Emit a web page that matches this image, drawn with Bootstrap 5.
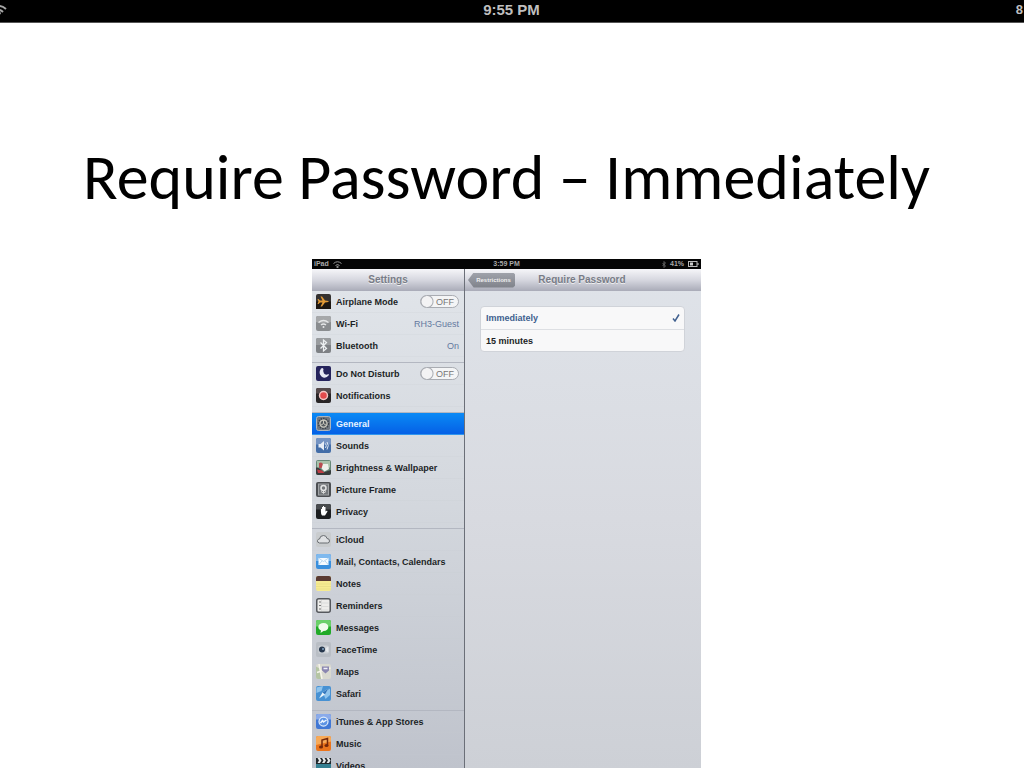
<!DOCTYPE html>
<html lang="en">
<head>
<meta charset="utf-8">
<meta name="viewport" content="width=device-width, initial-scale=1">
<title>Require Password – Immediately</title>
<link href="https://cdn.jsdelivr.net/npm/bootstrap@5.3.0/dist/css/bootstrap.min.css" rel="stylesheet">
<style>
  body { font-family: "Liberation Sans", Arial, sans-serif; background: #fff; }
  .topbar { height: 23px; background: #000; color: #bfbfbf; font-size: 15px; line-height: 20px; border-bottom: 1px solid #555; }
  .topbar .side { flex: 1 1 0; }
  .topbar .battery { font-size: 13px; padding-right: 1px; }
  .topbar svg { margin-left: -10px; }
  .slide { padding-right: 11px; }
  .slide-title { font-family: Carlito, Calibri, Lato, sans-serif; font-size: 64px; line-height: 70px; color: #000; padding-top: 119px; margin-bottom: 47px; font-weight: 400; }
  .tablet { width: 389px; font-size: 9px; line-height: 12px; color: #1c1f26; background: #000; }
  .tablet-status { height: 10px; background: #050505; color: #aaa; font-size: 7px; line-height: 10px; font-weight: 700; }
  .tablet-status .side { flex: 1 1 0; padding: 0 2px; }
  .sidebar { width: 153px; background: linear-gradient(#e1e5ea, #d4d8de 45%, #bfc3cc); border-right: 1px solid #6b6f78; }
  .detail { background: linear-gradient(#dfe3e9, #d8dae0 50%, #cdd0d6); }
  .bar { height: 22px; background: linear-gradient(#f6f6f9, #d6d7df 50%, #a9abb8); color: #787c87; font-size: 10px; font-weight: 700; text-shadow: 0 1px 0 #eee; }
  .detail .bar { display: grid; grid-template-columns: 47px 1fr 49px; align-items: center; text-align: center; padding-left: 3px; padding-right: 3px; }
  .back { height: 15px; padding: 0 3px 0 7px; border: 0; color: #eee; font-size: 6px; line-height: 15px; font-weight: 700; background: linear-gradient(#9fa2aa, #7f828a); clip-path: polygon(0 50%, 12% 0, 96% 0, 100% 12%, 100% 88%, 96% 100%, 12% 100%); }
  .group + .group { margin-top: 5px; border-top: 1px solid #b3b7c1; }
  .entry { height: 22px; padding: 0 5px 0 4px; gap: 5px; color: #1c1f26; font-weight: 700; text-decoration: none; border-bottom: 1px solid #c8ccd433; }
  .entry > svg { width: 15px; height: 15px; flex: none; }
  .entry .value { color: #64799f; font-weight: 400; }
  .entry.active { background: linear-gradient(#0a8af5, #0560e6); color: #e6f2ff; }
  .toggle { position: relative; width: 39px; height: 13px; }
  .toggle input { appearance: none; margin: 0; width: 39px; height: 13px; border: 1px solid #a9acb2; border-radius: 7px; background: radial-gradient(circle at 6px 50%, #f3f3f4 5px, #a9acb2 6px, #f4f5f6 7px); display: block; }
  .toggle span { position: absolute; left: 16px; top: 1px; line-height: 12px; font-weight: 400; color: #777; pointer-events: none; }
  .choices { margin: 15px 16px 0 15px; background: #f8f8f9; border: 1px solid #d0d3d9; border-radius: 4px; font-weight: 700; }
  .choice { height: 22px; padding: 0 4px 0 5px; }
  .choice + .choice { border-top: 1px solid #dddfe3; }
  .choice input { appearance: none; margin: 0; width: 0; height: 0; }
  .choice svg { visibility: hidden; }
  .choice:has(input:checked) { color: #40608f; }
  .choice:has(input:checked) svg { visibility: visible; }
</style>
</head>
<body class="vh-100 d-flex flex-column overflow-hidden">
<header class="topbar d-flex flex-shrink-0 fw-bold">
  <div class="side d-flex align-items-center"><svg width="18" height="16" viewBox="0 0 18 16" fill="none" stroke="#a5a5a5" stroke-width="2"><path d="M2 6Q9 0 16 6M5 9Q9 5 13 9"/><path d="M9 13l-2-3q2-2 4 0z" fill="#ccc" stroke="none"/></svg></div>
  <span>9:55 PM</span>
  <div class="side text-end battery">8</div>
</header>

<main class="slide flex-grow-1 d-flex flex-column align-items-center overflow-hidden">
  <h1 class="slide-title flex-shrink-0 text-nowrap">Require Password – Immediately</h1>

  <section class="tablet flex-grow-1 d-flex flex-column overflow-hidden">
    <div class="tablet-status d-flex flex-shrink-0">
      <div class="side d-flex align-items-center gap-1"><span>iPad</span><svg width="9" height="7" viewBox="0 0 18 14" fill="none" stroke="#999" stroke-width="2"><path d="M1 5Q9-2 17 5M5 9Q9 5 13 9"/><circle cx="9" cy="12" r="1.5" fill="#999"/></svg></div>
      <span>3:59 PM</span>
      <div class="side d-flex align-items-center justify-content-end gap-1"><svg width="4" height="7" viewBox="0 0 8 14" fill="none" stroke="#777" stroke-width="1.5"><path d="M1 4l6 6-3 3V1l3 3-6 6"/></svg><span>41%</span><svg width="11" height="6" viewBox="0 0 22 12"><rect x="1" y="1" width="17" height="10" fill="none" stroke="#bbb" stroke-width="2"/><path d="M4 3h6v6H4zM19 4h2v4h-2z" fill="#ccc"/></svg></div>
    </div>
    <div class="d-flex flex-grow-1 overflow-hidden">
      <nav class="sidebar flex-shrink-0 overflow-hidden" aria-label="Settings">
        <div class="bar d-flex align-items-center justify-content-center">Settings</div>
        <div class="group">
          <div class="entry d-flex align-items-center">
            <svg viewBox="0 0 30 30"><rect width="30" height="30" rx="4" fill="#343130"/><path d="M0 15h30v15H0z" fill="#1d1712"/><path d="M25 14l-7-1-6-8h-3l4 8H8L5 10H3l2 5-2 5h2l3-3h5l-4 8h3l6-8 7-1z" fill="#e29a36"/></svg>
            <label for="airplane" class="me-auto">Airplane Mode</label>
            <div class="toggle"><input type="checkbox" role="switch" id="airplane"><span>OFF</span></div>
          </div>
          <a href="#" class="entry d-flex align-items-center">
            <svg viewBox="0 0 30 30"><rect width="30" height="30" rx="4" fill="#898c8f"/><path d="M0 4q0-4 4-4h22q4 0 4 4v8q-15 6-30 0z" fill="#a6a8aa"/><path d="M5 13q10-8 20 0M10 18q5-4 10 0" fill="none" stroke="#e5e7e8" stroke-width="3"/><circle cx="15" cy="22" r="2" fill="#e5e7e8"/></svg>
            <span class="me-auto">Wi-Fi</span><span class="value">RH3-Guest</span>
          </a>
          <a href="#" class="entry d-flex align-items-center">
            <svg viewBox="0 0 30 30"><rect width="30" height="30" rx="4" fill="#7e8185"/><path d="M0 4q0-4 4-4h22q4 0 4 4v10H0z" fill="#999c9f"/><path d="M9 9l12 12-6 5V4l6 5L9 21" fill="none" stroke="#edf0f2" stroke-width="2.5"/></svg>
            <span class="me-auto">Bluetooth</span><span class="value">On</span>
          </a>
        </div>
        <div class="group">
          <div class="entry d-flex align-items-center">
            <svg viewBox="0 0 30 30"><rect width="30" height="30" rx="4" fill="#25235c"/><path d="M10 5q-6 9 1 16 8 6 15-3l-1-2q-6 3-9-1t-1-9l-2-2z" fill="#e7e8f4"/></svg>
            <label for="dnd" class="me-auto">Do Not Disturb</label>
            <div class="toggle"><input type="checkbox" role="switch" id="dnd"><span>OFF</span></div>
          </div>
          <a href="#" class="entry d-flex align-items-center">
            <svg viewBox="0 0 30 30"><rect width="30" height="30" rx="4" fill="#282526"/><path d="M0 4q0-4 4-4h22q4 0 4 4v7H0z" fill="#55494a"/><circle cx="15" cy="15" r="8" fill="#e24b4c" stroke="#f2c6c4" stroke-width="3"/></svg>
            <span>Notifications</span>
          </a>
        </div>
        <div class="group">
          <a href="#" class="entry active d-flex align-items-center" aria-current="page">
            <svg viewBox="0 0 30 30"><rect x="1" y="1" width="28" height="28" rx="4" fill="#707780" stroke="#aeb4ba" stroke-width="2"/><circle cx="15" cy="15" r="10" fill="none" stroke="#3b4148" stroke-width="3" stroke-dasharray="3 2"/><circle cx="15" cy="15" r="7" fill="#555b61" stroke="#cbc9bd" stroke-width="2.5"/><path d="M15 15V8M15 15l-6 4M15 15l6 4" stroke="#cbc9bd" stroke-width="2"/></svg>
            <span>General</span>
          </a>
          <a href="#" class="entry d-flex align-items-center">
            <svg viewBox="0 0 30 30"><rect width="30" height="30" rx="4" fill="#436da8"/><path d="M0 4q0-4 4-4h22q4 0 4 4v9H0z" fill="#7594c3"/><path d="M5 12h4l7-6v19l-7-6H5z" fill="#e6edf6"/><path d="M19 11q3 4 0 9M22 8q5 7 0 15" fill="none" stroke="#dce6f2" stroke-width="2"/></svg>
            <span>Sounds</span>
          </a>
          <a href="#" class="entry d-flex align-items-center">
            <svg viewBox="0 0 30 30"><rect width="30" height="30" rx="4" fill="#668878"/><path d="M2 2h26v13H2z" fill="#a8c1aa"/><path d="M0 15q8 0 14 10l16-5v6q0 4-4 4H4q-4 0-4-4z" fill="#353b3b"/><path d="M6 6q7-3 8 4l-2 6H6z" fill="#b84c51"/><path d="M14 8h10l2 10-9 5-6-6z" fill="#eef1ec"/><path d="M2 19l10 2 5 5H4z" fill="#bd3d46"/></svg>
            <span>Brightness &amp; Wallpaper</span>
          </a>
          <a href="#" class="entry d-flex align-items-center">
            <svg viewBox="0 0 30 30"><rect width="30" height="30" rx="4" fill="#4b4e52"/><rect x="5" y="4" width="20" height="22" fill="#73777b" stroke="#a1a4a7" stroke-width="2"/><circle cx="15" cy="12" r="5" fill="none" stroke="#e4e5e6" stroke-width="3"/><path d="M15 17v6M15 22l-5-3M15 22l5-3" stroke="#ddd" stroke-width="2"/></svg>
            <span>Picture Frame</span>
          </a>
          <a href="#" class="entry d-flex align-items-center">
            <svg viewBox="0 0 30 30"><rect width="30" height="30" rx="4" fill="#1c1e20"/><path d="M0 4q0-4 4-4h22q4 0 4 4v7H0z" fill="#484b4e"/><path d="M10 10h2V6h2V4h2v2h3v9l3-2 1 2-5 8h-6q-3-3-2-13z" fill="#fff"/></svg>
            <span>Privacy</span>
          </a>
        </div>
        <div class="group">
          <a href="#" class="entry d-flex align-items-center">
            <svg viewBox="0 0 30 30"><rect width="30" height="30" rx="4" fill="#c9ccce"/><path d="M7 22q-5-1-4-5 1-3 4-3 1-7 8-7 6 0 7 6 5 0 5 5 0 4-4 4z" fill="#dfe1e3" stroke="#686c70" stroke-width="2"/></svg>
            <span>iCloud</span>
          </a>
          <a href="#" class="entry d-flex align-items-center">
            <svg viewBox="0 0 30 30"><rect width="30" height="30" rx="4" fill="#398fdd"/><path d="M0 4q0-4 4-4h22q4 0 4 4v10H0z" fill="#7fb9ee"/><rect x="5" y="8" width="20" height="14" fill="#f6fbff"/><path d="M5 8l10 7 10-7M5 22l7-8M25 22l-7-8" stroke="#a5cbe9" stroke-width="1.5" fill="none"/></svg>
            <span>Mail, Contacts, Calendars</span>
          </a>
          <a href="#" class="entry d-flex align-items-center">
            <svg viewBox="0 0 30 30"><rect width="30" height="30" rx="4" fill="#f6eb91"/><path d="M0 10V4q0-4 4-4h22q4 0 4 4v6z" fill="#593a32"/><path d="M0 16h30M0 21h30M0 26h30" stroke="#ded47f"/></svg>
            <span>Notes</span>
          </a>
          <a href="#" class="entry d-flex align-items-center">
            <svg viewBox="0 0 30 30"><rect x="1.5" y="1.5" width="27" height="27" rx="4" fill="#ededeb" stroke="#55585d" stroke-width="3"/><path d="M6 8h4M6 15h4M6 22h4" stroke="#777" stroke-width="2"/><path d="M12 10h13M12 17h13M12 24h13M11 4v22" stroke="#c7c8c9"/></svg>
            <span>Reminders</span>
          </a>
          <a href="#" class="entry d-flex align-items-center">
            <svg viewBox="0 0 30 30"><rect width="30" height="30" rx="4" fill="#20aa27"/><path d="M0 4q0-4 4-4h22q4 0 4 4v9H0z" fill="#6bd06a"/><path d="M15 6c13 0 13 16 0 16l-6 4 1-5C1 17 4 6 15 6z" fill="#f0fcec"/></svg>
            <span>Messages</span>
          </a>
          <a href="#" class="entry d-flex align-items-center">
            <svg viewBox="0 0 30 30"><rect width="30" height="30" rx="4" fill="#b9bec5"/><rect x="5" y="7" width="20" height="16" rx="3" fill="#ced2d7"/><circle cx="12" cy="15" r="6" fill="#27384e"/><circle cx="14" cy="14" r="2" fill="#83a5c5"/><path d="M20 12l5-3v12l-5-3z" fill="#e7eaed"/></svg>
            <span>FaceTime</span>
          </a>
          <a href="#" class="entry d-flex align-items-center">
            <svg viewBox="0 0 30 30"><rect width="30" height="30" rx="4" fill="#d9d9d0"/><path d="M0 5l7 4 3 21H4q-4 0-4-4z" fill="#b5c5a4"/><path d="M2 17l27-9M6 0l6 30" stroke="#f6f5e9" stroke-width="3"/><path d="M12 5h14v8l-7 6-7-6z" fill="#8a86b0"/><path d="M15 9h8" stroke="#f1f1fa" stroke-width="3"/></svg>
            <span>Maps</span>
          </a>
          <a href="#" class="entry d-flex align-items-center">
            <svg viewBox="0 0 30 30"><rect width="30" height="30" rx="4" fill="#4791d3"/><path d="M1 3l13-3-3 10-10 4zM14 14l14-9v13l-9 8z" fill="#8fc4ed"/><path d="M25 5l-7 12-12 8 7-12z" fill="#eaf4fa"/><path d="M25 5l-7 12-5-4z" fill="#3477bd"/></svg>
            <span>Safari</span>
          </a>
        </div>
        <div class="group">
          <a href="#" class="entry d-flex align-items-center">
            <svg viewBox="0 0 30 30"><rect width="30" height="30" rx="4" fill="#4178d5"/><path d="M0 4q0-4 4-4h22q4 0 4 4v7H0z" fill="#8babea"/><circle cx="15" cy="15" r="9" fill="#5d93e4" stroke="#e1edfb" stroke-width="2.5"/><path d="M9 18l4-5 2 3 6-4" fill="none" stroke="#edf5ff" stroke-width="3"/></svg>
            <span>iTunes &amp; App Stores</span>
          </a>
          <a href="#" class="entry d-flex align-items-center">
            <svg viewBox="0 0 30 30"><rect width="30" height="30" rx="4" fill="#ea741c"/><path d="M0 4q0-4 4-4h22q4 0 4 4v7L0 18z" fill="#f7a957"/><path d="M12 22V8l11-3v14" fill="none" stroke="#74280b" stroke-width="3"/><ellipse cx="10" cy="22" rx="4" ry="3" fill="#74280b"/><ellipse cx="21" cy="19" rx="4" ry="3" fill="#74280b"/></svg>
            <span>Music</span>
          </a>
          <a href="#" class="entry d-flex align-items-center">
            <svg viewBox="0 0 30 30"><rect width="30" height="30" rx="3" fill="#347f91"/><path d="M0 0h30v12H0z" fill="#20272b"/><path d="M3 0h5l3 5-3 5H3l3-5zM12 0h5l3 5-3 5h-5l3-5zM21 0h5l3 5-3 5h-5l3-5z" fill="#e3e7e8"/></svg>
            <span>Videos</span>
          </a>
        </div>
      </nav>
      <div class="detail flex-grow-1">
        <div class="bar"><button type="button" class="back">Restrictions</button><span>Require Password</span></div>
        <div class="choices">
          <label class="choice d-flex align-items-center"><input type="radio" name="delay" checked><span class="me-auto">Immediately</span><svg width="8" height="8" viewBox="0 0 16 16" fill="none" stroke="#40608f" stroke-width="3"><path d="M2 9l4 5L14 1"/></svg></label>
          <label class="choice d-flex align-items-center"><input type="radio" name="delay"><span class="me-auto">15 minutes</span><svg width="8" height="8" viewBox="0 0 16 16" fill="none" stroke="#40608f" stroke-width="3"><path d="M2 9l4 5L14 1"/></svg></label>
        </div>
      </div>
    </div>
  </section>
</main>
<script src="https://cdn.jsdelivr.net/npm/bootstrap@5.3.0/dist/js/bootstrap.bundle.min.js"></script>
</body>
</html>
